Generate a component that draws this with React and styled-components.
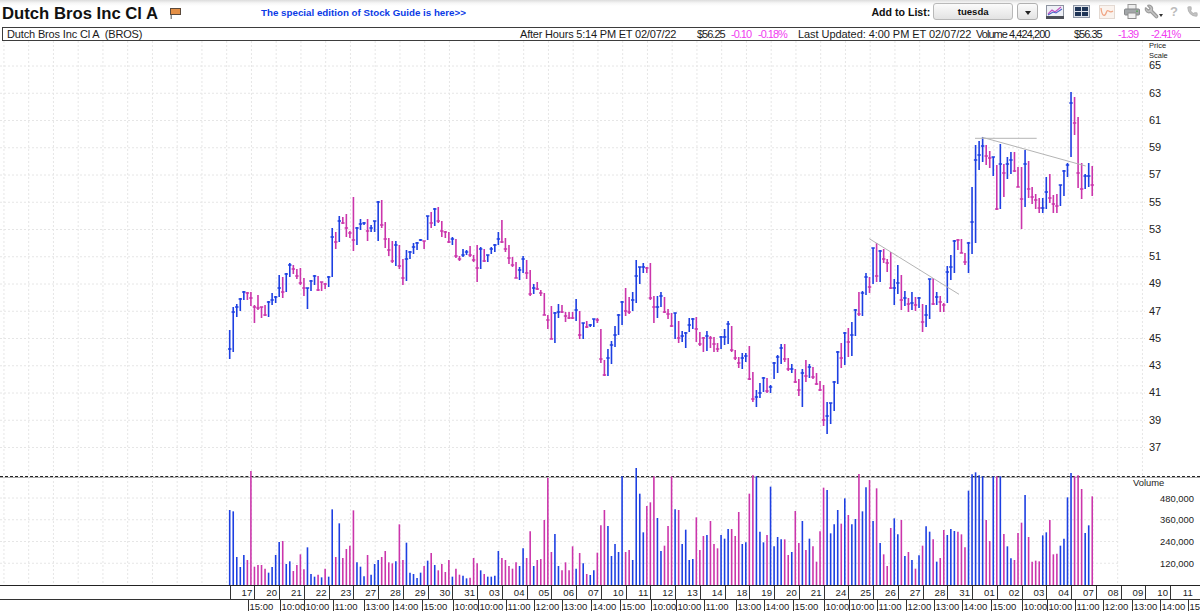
import styled, { createGlobalStyle } from "styled-components";
import { Wrench, Phone } from "lucide-react";

const GlobalStyle = createGlobalStyle`
  html, body { margin: 0; padding: 0; background: #fff; }
  body { font-family: "Liberation Sans", Arial, sans-serif; color: #111; }
`;

const BLUE = "#1d3fe2";
const PINK = "#cb35ab";
const GRID = "#e6e6e6";

// top, bottom, close tick, colour
const priceBars = [
  [330,359,349,"b"],[307,352,312,"b"],[304,317,307,"b"],[298,311,299,"b"],[291,300,292,"b"],[292,300,293,"p"],[292,306,298,"p"],
  [305,323,307,"p"],[295,310,308,"p"],[307,318,307,"p"],[305,316,315,"p"],[301,317,302,"b"],[293,305,300,"b"],[296,303,297,"b"],
  [275,297,288,"b"],[277,298,292,"p"],[273,292,274,"b"],[263,277,265,"b"],[265,274,269,"p"],[269,279,276,"p"],[268,285,283,"p"],
  [278,296,288,"p"],[288,309,288,"b"],[280,291,281,"b"],[275,285,276,"b"],[276,291,290,"p"],[282,291,282,"p"],[283,289,284,"p"],
  [276,287,277,"b"],[228,277,237,"b"],[232,249,242,"p"],[216,242,221,"b"],[217,224,223,"p"],[214,237,228,"p"],[231,238,233,"p"],
  [197,251,240,"p"],[227,245,228,"b"],[219,230,224,"b"],[222,225,223,"b"],[219,241,231,"p"],[225,232,228,"b"],[221,232,221,"b"],
  [201,241,202,"b"],[200,228,225,"p"],[222,248,239,"p"],[238,256,250,"p"],[241,263,261,"p"],[241,266,245,"b"],[245,269,266,"p"],
  [259,285,278,"p"],[250,281,259,"b"],[251,259,252,"b"],[243,254,247,"b"],[242,250,243,"b"],[239,241,240,"b"],[241,249,241,"p"],
  [216,240,216,"b"],[212,228,223,"p"],[208,226,209,"b"],[207,223,221,"p"],[221,237,231,"p"],[231,238,232,"p"],[232,243,242,"p"],
  [237,245,239,"b"],[239,258,256,"p"],[256,261,259,"p"],[249,257,255,"b"],[250,255,252,"b"],[246,257,255,"p"],[255,262,260,"p"],
  [245,282,268,"p"],[247,269,249,"b"],[249,262,261,"p"],[255,262,255,"b"],[247,254,249,"b"],[244,252,245,"b"],[232,245,239,"b"],
  [220,243,242,"p"],[238,252,249,"p"],[245,264,258,"p"],[257,267,265,"p"],[262,278,278,"p"],[267,280,270,"b"],[256,273,259,"b"],
  [260,279,273,"p"],[270,296,294,"p"],[284,294,288,"b"],[282,290,289,"p"],[290,296,293,"p"],[293,315,315,"p"],[315,329,320,"p"],
  [306,339,339,"p"],[312,343,313,"b"],[304,318,312,"b"],[305,313,312,"p"],[312,322,316,"p"],[312,319,318,"p"],[312,319,318,"p"],
  [299,321,310,"b"],[311,339,335,"p"],[323,339,323,"b"],[321,328,327,"p"],[324,327,325,"b"],[319,327,319,"b"],[318,323,320,"p"],
  [329,363,359,"p"],[360,376,375,"p"],[349,376,358,"b"],[341,364,345,"b"],[326,347,335,"b"],[314,335,315,"b"],[301,325,302,"b"],
  [288,316,311,"p"],[297,314,312,"p"],[292,311,300,"b"],[260,303,276,"b"],[267,284,267,"b"],[263,273,267,"b"],[267,273,268,"p"],
  [263,300,298,"p"],[296,323,307,"p"],[296,318,307,"b"],[292,307,296,"b"],[297,313,312,"p"],[309,319,314,"p"],[313,327,326,"p"],
  [313,339,313,"b"],[321,343,338,"p"],[331,342,336,"b"],[332,348,333,"b"],[318,332,325,"b"],[318,329,319,"b"],[317,342,329,"p"],
  [332,346,344,"p"],[337,352,338,"p"],[331,351,336,"b"],[336,348,338,"p"],[337,352,344,"p"],[343,352,349,"p"],[336,349,337,"b"],
  [329,345,337,"b"],[321,344,324,"b"],[326,352,350,"p"],[350,360,358,"p"],[357,368,363,"p"],[353,369,358,"b"],[353,362,356,"b"],
  [346,380,379,"p"],[372,402,399,"p"],[390,407,397,"b"],[383,398,393,"b"],[377,392,378,"b"],[378,393,391,"p"],[385,393,387,"b"],
  [362,379,363,"b"],[355,373,357,"b"],[344,364,348,"b"],[344,362,359,"p"],[358,371,369,"p"],[364,373,369,"b"],[369,383,382,"p"],
  [379,396,390,"p"],[369,407,373,"b"],[360,382,376,"p"],[364,378,367,"b"],[367,379,377,"p"],[373,385,384,"p"],[381,391,390,"p"],
  [385,426,420,"p"],[402,434,416,"b"],[403,424,403,"b"],[381,411,382,"b"],[351,384,352,"b"],[343,368,358,"p"],[332,365,333,"b"],
  [328,357,342,"p"],[322,356,335,"b"],[309,336,310,"b"],[292,316,314,"p"],[291,316,293,"b"],[273,295,277,"b"],[277,293,287,"p"],
  [248,284,248,"b"],[243,282,276,"p"],[250,282,251,"b"],[249,263,259,"p"],[259,272,263,"p"],[252,289,288,"p"],[279,305,288,"b"],
  [265,294,283,"b"],[275,310,300,"p"],[291,306,298,"b"],[298,312,304,"p"],[292,310,303,"b"],[297,311,305,"p"],[297,308,298,"b"],
  [304,332,322,"p"],[305,327,315,"b"],[279,319,279,"b"],[278,305,304,"p"],[292,305,297,"b"],[296,312,302,"p"],[303,312,305,"p"],
  [266,303,272,"b"],[255,280,267,"b"],[240,273,241,"b"],[239,250,240,"p"],[239,253,253,"p"],[253,265,262,"p"],[242,273,243,"b"],
  [187,254,222,"b"],[145,243,160,"b"],[141,170,155,"b"],[137,162,146,"b"],[145,165,156,"p"],[151,168,158,"p"],[157,176,157,"b"],
  [165,210,209,"p"],[144,209,164,"b"],[164,197,173,"p"],[157,179,164,"b"],[152,174,160,"b"],[152,172,171,"p"],[167,187,187,"p"],
  [167,229,199,"p"],[150,207,164,"b"],[161,198,189,"p"],[187,204,197,"p"],[194,209,200,"p"],[198,213,208,"p"],[198,213,208,"b"],
  [177,209,192,"b"],[174,203,198,"p"],[195,213,204,"p"],[194,213,206,"p"],[185,206,185,"b"],[170,196,171,"b"],[163,177,165,"b"],
  [92,157,103,"b"],[97,135,123,"p"],[117,188,173,"p"],[163,199,189,"p"],[174,189,176,"b"],[163,187,176,"b"],[166,196,185,"p"],
];

// bar tops, in thirds of a pixel below y=465
const volumeBars = `135b 139b 276b 306b 270b 285p 18p 305p 300p 300p 311p 323b 306b 270b 231b 228p 297b 289b 318p 300p 268p 313p 247b 327b 335b 329p 337b 311p 335b 133b
276p 175b 279p 252p 242p 136p 292b 305b 334b 270p 329b 297b 285b 276p 258p 292p 295p 289b 178p 285p 233b 323b 327b 339b 323b 303p 287b 264p 300b 316p
297p 321p 285p 335b 311p 329p 332b 340b 338p 279p 295p 316b 327p 335b 335b 332b 258b 279p 285p 303p 311p 292p 303b 250b 279p 199p 303b 285p 282p 165p
38p 261p 207b 303b 316p 292p 316p 244p 311b 264p 295b 327p 330b 316b 263p 181p 135p 183b 273b 237b 261b 34b 261p 255p 285b 9b 86b 202b 123p 112p
34p 159b 258b 242p 183p 34p 133b 135p 237b 194b 285b 282b 157p 255p 213p 210b 168p 237p 250p 210b 221b 192b 192p 213p 141p 237b 232b 86p 31p 34b
200b 232b 210p 65b 244b 216b 223b 223p 270p 261b 138p 234p 168b 255p 221b 244p 290p 199p 68p 75b 205b 178b 135b 176p 100b 150p 178b 162b 27p 139b
67b 45p 168b 70p 234b 268p 303p 189p 160b 208b 165p 273b 261p 285b 311p 271b 242p 184b 200b 223p 290b 279p 195p 210b 192b 198b 200p 208p 247p 77b
28b 22b 31b 34b 165p 228p 34b 34p 34b 207p 244b 280b 285p 204p 173p 90b 216p 290p 287p 289p 211b 202b 165p 268p 266p 242b 221b 97b 24b 34p
31p 72p 204b 181b 94p`.trim().split(/\s+/);

const priceLabels = [65, 63, 61, 59, 57, 55, 53, 51, 49, 47, 45, 43, 41, 39, 37];
const volumeLabels = ["480,000", "360,000", "240,000", "120,000"];
const dates = ["17","20","21","22","23","27","28","29","30","31","03","04","05","06","07","10","11","12","13","14","18","19","20","21","24","25","26","27","28","31","01","02","03","04","07","08","09","10","11"];
const times = [
  ["15:00",32],["10:00",24],["10:00",29],["11:00",31],["13:00",29],["14:00",29],["15:00",31],["10:00",25],["10:00",28],["11:00",28],["12:00",28],
  ["13:00",29],["14:00",29],["15:00",31],["10:00",25],["10:00",28],["11:00",32],["13:00",28],["14:00",29],["15:00",31],["10:00",25],["10:00",28],
  ["11:00",29],["12:00",28],["13:00",28],["14:00",29],["15:00",31],["10:00",25],["10:00",28],["11:00",28],["12:00",29],["13:00",28],["14:00",28],["15:00",28],
];

const barX = (i) => 229.7 + i * 3.535;
const gridX = Array.from({ length: 47 }, (_, k) => 3.95 + k * 24.75);

const Page = styled.div`
  width: 1200px;
  height: 611px;
  overflow: hidden;
  display: flex;
  flex-direction: column;
  background: #fff;
`;

const TopBar = styled.header`
  height: 27px;
  display: flex;
  align-items: center;
  padding: 0 2px;
  box-sizing: border-box;
  background: linear-gradient(#dcdcdc 0, #f6f6f6 3px, #fff 6px);
`;

const Title = styled.h1`
  margin: 0;
  font-size: 16.7px;
  font-weight: 700;
  color: #111;
  white-space: nowrap;
`;

const PromoLink = styled.a`
  margin-left: 80px;
  width: 612px;
  padding-bottom: 2px;
  font-size: 9.75px;
  font-weight: 700;
  color: #0b3be6;
  white-space: nowrap;
`;

const ListLabel = styled.span`
  font-size: 10.6px;
  font-weight: 700;
  margin-right: 3px;
  padding-bottom: 4px;
  white-space: nowrap;
`;

const ListSelect = styled.div`
  width: 80px;
  height: 17px;
  box-sizing: border-box;
  margin-bottom: 4px;
  border: 1px solid #b9b9b9;
  border-radius: 3px;
  background: linear-gradient(#fbfbfb, #e3e3e3);
  font-size: 9.6px;
  font-weight: 700;
  line-height: 15px;
  text-align: center;
`;

const CaretButton = styled.div`
  width: 21px;
  height: 17px;
  box-sizing: border-box;
  margin: 0 8px 4px 4px;
  border: 1px solid #b0b0b0;
  border-radius: 3px;
  background: linear-gradient(#fbfbfb, #e3e3e3);
  display: flex;
  align-items: center;
  justify-content: center;
  &::after {
    content: "";
    border-left: 3px solid transparent;
    border-right: 3px solid transparent;
    border-top: 4px solid #222;
    margin-top: 2px;
  }
`;

const Tools = styled.div`
  display: flex;
  align-items: center;
  margin-bottom: 4px;
  gap: 9px;
`;

const WrenchTool = styled.span`
  display: flex;
  align-items: flex-end;
  margin-left: -5px;
  svg { transform: scaleX(-1); }
  &::after {
    content: "";
    border-left: 2px solid transparent;
    border-right: 2px solid transparent;
    border-top: 3px solid #333;
    margin-bottom: 2px;
  }
`;

const ToolGlyph = styled.span`
  font-size: 13px;
  font-weight: 700;
  color: #bcbcbc;
  line-height: 13px;
  margin-left: -2px;
`;

const InfoBar = styled.div`
  height: 14px;
  box-sizing: border-box;
  border-top: 1.5px solid #3d3d3d;
  border-bottom: 1.5px solid #3d3d3d;
  border-left: 1px solid #3d3d3d;
  margin-left: 2px;
  padding-left: 4px;
  display: flex;
  align-items: center;
`;

const InfoText = styled.span`
  flex: none;
  width: ${(p) => p.$w}px;
  font-size: 11px;
  letter-spacing: ${(p) => p.$track || 0}px;
  color: ${(p) => (p.$down ? "#f03cf0" : "#1a1a1a")};
  white-space: pre;
  line-height: 10px;
`;

const PricePane = styled.section`
  height: 435px;
  display: flex;
`;

const PriceChart = styled.svg`
  width: 1145px;
  height: 435px;
  flex: none;
`;

const ScaleColumn = styled.div`
  padding-left: 4px;
  font-size: 11px;
  color: #222;
`;

const ScaleCaption = styled.div`
  height: 11.4px;
  font-size: 7.5px;
  line-height: 9.5px;
`;

const ScaleLabel = styled.div`
  height: 27.25px;
  line-height: 27.25px;
`;

const VolumePane = styled.section`
  height: 110px;
  box-sizing: border-box;
  border-top: 1px dashed #222;
  border-bottom: 1px solid #222;
  display: flex;
  box-shadow: inset 0 1px 0 #aaa;
`;

const VolumeChart = styled.svg`
  width: 1125px;
  height: 108px;
  flex: none;
  overflow: visible;
`;

const VolumeScale = styled.div`
  flex: 1;
  padding: 0 6px 0 8px;
  font-size: 9.4px;
  color: #222;
`;

const VolumeTitle = styled.div`
  height: 10.5px;
  line-height: 11px;
`;

const VolumeLabel = styled.div`
  height: 21.75px;
  line-height: 21.75px;
  text-align: right;
`;

const DateRow = styled.div`
  height: 14px;
  box-sizing: border-box;
  border-bottom: 1px solid #333;
  padding-left: 229.5px;
  display: flex;
`;

const DateCell = styled.div`
  flex: none;
  width: 24.75px;
  box-sizing: border-box;
  border-left: 1px solid #333;
  padding-right: 2px;
  text-align: right;
  font-size: 9.6px;
  line-height: 13px;
  color: #222;
`;

const TimeRow = styled.div`
  height: 11px;
  padding-left: 247.5px;
  display: flex;
`;

const TimeCell = styled.div`
  flex: none;
  width: ${(p) => p.$w}px;
  box-sizing: border-box;
  border-left: 1px solid #333;
  padding-left: 1px;
  font-size: 9.5px;
  line-height: 14.5px;
  color: #222;
  white-space: nowrap;
`;

const FlagIcon = () => (
  <svg width="11" height="11" viewBox="0 0 11 11" style={{ marginLeft: 12, marginBottom: 1, flex: "none" }}>
    <rect x="0.5" y="0" width="1.5" height="11" fill="#8b8b8b" />
    <rect x="0.5" y="0.5" width="10" height="6" fill="#e48f45" stroke="#5b4a3c" />
  </svg>
);

const ChartIcon = () => (
  <svg width="18" height="14" viewBox="0 0 18 14">
    <rect x="0.5" y="0.5" width="17" height="13" fill="#eef0f6" stroke="#8d93a0" />
    <rect x="0" y="11" width="18" height="3" fill="#4c4f58" />
    <path d="M2 9 L6 5 L9 7 L15 2" stroke="#c24fc0" strokeWidth="1.1" fill="none" />
    <path d="M2 10 L7 7 L10 8 L16 4" stroke="#4a62c8" strokeWidth="1.1" fill="none" />
  </svg>
);

const LayoutIcon = () => (
  <svg width="17" height="13" viewBox="0 0 17 13">
    <rect x="0.5" y="0.5" width="16" height="12" fill="#dfe3ea" stroke="#8f97a6" />
    <rect x="2" y="2" width="6" height="4" fill="#1f3557" />
    <rect x="9" y="2" width="6" height="4" fill="#1f3557" />
    <rect x="2" y="7" width="6" height="4" fill="#1f3557" />
    <rect x="9" y="7" width="6" height="4" fill="#1f3557" />
  </svg>
);

const CurveIcon = () => (
  <svg width="16" height="14" viewBox="0 0 16 14">
    <rect x="0.5" y="0.5" width="15" height="13" fill="#faf3ee" stroke="#e3d9d2" />
    <path d="M2 3 C3 12 6 12 7.5 7 C9 3 10 9 14 6" stroke="#f0a584" strokeWidth="1.3" fill="none" />
  </svg>
);

const PrinterIcon = () => (
  <svg width="16" height="15" viewBox="0 0 16 15">
    <rect x="4" y="0.5" width="8" height="5" fill="#eee" stroke="#9a9a9a" />
    <rect x="0.5" y="5" width="15" height="6" rx="1" fill="#a2a6a8" stroke="#848688" />
    <rect x="4" y="9" width="8" height="5.5" fill="#f1f1f1" stroke="#8f8f8f" />
    <rect x="12" y="6.5" width="2" height="1.5" fill="#6aa86a" />
  </svg>
);

export default function App() {
  return (
    <Page>
      <GlobalStyle />
      <TopBar>
        <Title>Dutch Bros Inc Cl A</Title>
        <FlagIcon />
        <PromoLink>The special edition of Stock Guide is here&gt;&gt;</PromoLink>
        <ListLabel>Add to List:</ListLabel>
        <ListSelect>tuesda</ListSelect>
        <CaretButton />
        <Tools>
          <ChartIcon />
          <LayoutIcon />
          <CurveIcon />
          <PrinterIcon />
          <WrenchTool>
            <Wrench size={15} color="#9c9c9c" fill="#c4c4c4" strokeWidth={2} />
          </WrenchTool>
          <ToolGlyph>?</ToolGlyph>
          <Phone size={11} color="#b5b5b5" fill="#c4c4c4" strokeWidth={2.4} />
        </Tools>
      </TopBar>

      <InfoBar>
        <InfoText $w={513} $track={-0.15}>Dutch Bros Inc Cl A  (BROS)</InfoText>
        <InfoText $w={177} $track={-0.2}>After Hours 5:14 PM ET 02/07/22</InfoText>
        <InfoText $w={34} $track={-1}>$56.25</InfoText>
        <InfoText $w={27} $down $track={-1}>-0.10</InfoText>
        <InfoText $w={40} $down $track={-1}>-0.18%</InfoText>
        <InfoText $w={178} $track={-0.06}>Last Updated: 4:00 PM ET 02/07/22</InfoText>
        <InfoText $w={98} $track={-0.95}>Volume 4,424,200</InfoText>
        <InfoText $w={44} $track={-1}>$56.35</InfoText>
        <InfoText $w={33} $down $track={-1}>-1.39</InfoText>
        <InfoText $w={40} $down $track={-0.9}>-2.41%</InfoText>
      </InfoBar>

      <PricePane>
        <PriceChart viewBox="0 41 1145 435">
          {gridX.map((x) => (
            <line key={x} x1={x} x2={x} y1={41} y2={476} stroke={GRID} strokeDasharray="2 2" />
          ))}
          {priceLabels.map((_, k) => (
            <line key={k} x1={0} x2={1145} y1={66 + k * 27.25} y2={66 + k * 27.25} stroke={GRID} strokeDasharray="2 2" />
          ))}
          {priceBars.map(([top, bottom, tick, c], i) => {
            const x = barX(i);
            return (
              <path
                key={i}
                d={`M${x} ${top}V${bottom}M${x - 1.7} ${tick}H${x + 1.7}`}
                stroke={c === "b" ? BLUE : PINK}
                strokeWidth="1.6"
                fill="none"
              />
            );
          })}
          <line x1={869.3} y1={238.7} x2={959} y2={294.3} stroke="#b4b4b4" />
          <line x1={982.3} y1={137.3} x2={1085.7} y2={166} stroke="#b4b4b4" />
          <line x1={975} y1={138.3} x2={1036.7} y2={138.3} stroke="#b4b4b4" />
        </PriceChart>
        <ScaleColumn>
          <ScaleCaption>Price<br />Scale</ScaleCaption>
          {priceLabels.map((p) => (
            <ScaleLabel key={p}>{p}</ScaleLabel>
          ))}
        </ScaleColumn>
      </PricePane>

      <VolumePane>
        <VolumeChart viewBox="0 477 1125 108">
          {gridX.slice(0, 46).map((x) => (
            <line key={x} x1={x} x2={x} y1={477} y2={585} stroke={GRID} strokeDasharray="2 2" />
          ))}
          {volumeLabels.map((_, k) => (
            <line key={k} x1={0} x2={1119} y1={498 + k * 21.75} y2={498 + k * 21.75} stroke={GRID} strokeDasharray="2 2" />
          ))}
          {volumeBars.map((v, i) => (
            <line
              key={i}
              x1={barX(i)}
              x2={barX(i)}
              y1={465 + parseInt(v) / 3}
              y2={585}
              stroke={v.endsWith("b") ? BLUE : PINK}
              strokeWidth="1.6"
            />
          ))}
        </VolumeChart>
        <VolumeScale>
          <VolumeTitle>Volume</VolumeTitle>
          {volumeLabels.map((l) => (
            <VolumeLabel key={l}>{l}</VolumeLabel>
          ))}
        </VolumeScale>
      </VolumePane>

      <DateRow>
        {dates.map((d, i) => (
          <DateCell key={i}>{d}</DateCell>
        ))}
      </DateRow>
      <TimeRow>
        {times.map(([t, w], i) => (
          <TimeCell key={i} $w={w}>{t}</TimeCell>
        ))}
      </TimeRow>
    </Page>
  );
}
